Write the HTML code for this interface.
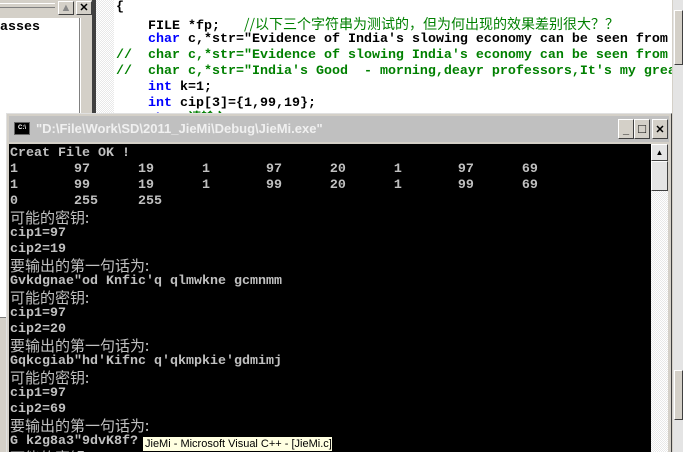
<!DOCTYPE html><html><head><meta charset="utf-8"><style>
*{margin:0;padding:0;box-sizing:border-box}
html,body{width:683px;height:452px;overflow:hidden}
body{background:#fff;position:relative;font-family:"Liberation Mono","Noto Sans CJK SC",monospace}
.abs{position:absolute}
.code{position:absolute;left:116px;top:0;font:bold 13.33px/16px "Liberation Mono","Noto Sans CJK SC",monospace;color:#000}
.code div,.con div{height:16px;line-height:16px;white-space:pre;overflow:visible}
.b{color:#0000ff}.g{color:#008000}
.con{position:absolute;left:10px;top:146px;font:bold 13.33px/16px "Liberation Mono","Noto Sans CJK SC",monospace;color:#c0c0c0}
.cj{font-weight:normal;font-family:"Noto Sans CJK SC",sans-serif;font-size:15px;line-height:16px}
.btn{position:absolute;width:16px;height:14px;background:#d4d0c8;border:1px solid;border-color:#fff #404040 #404040 #fff;font:bold 11px/12px "Liberation Sans",sans-serif;text-align:center;color:#000}
.dith{background-image:repeating-conic-gradient(#e8e8e8 0 25%,#fff 0 50%);background-size:2px 2px}
</style></head><body>
<div class="abs" style="left:0;top:0;width:96px;height:452px;background:#d4d0c8"></div>
<div class="abs" style="left:0;top:3px;width:55px;height:5px;border-top:1px solid #fff;border-bottom:1px solid #808080"></div>
<div class="btn" style="left:58px;top:1px;color:#888">▲</div>
<div class="btn" style="left:76px;top:1px">✕</div>
<div class="abs" style="left:0;top:18px;width:80px;height:300px;background:#fff;border-right:1px solid #808080;border-bottom:1px solid #808080"></div>
<div class="abs" style="left:0;top:20px;font:bold 13.33px/16px 'Liberation Mono',monospace">asses</div>
<div class="abs" style="left:80px;top:18px;width:14px;height:434px;background:#d4d0c8;border-left:1px solid #fff"></div>
<div class="abs" style="left:92px;top:0;width:4px;height:452px;background:#404040"></div>
<div class="abs dith" style="left:96px;top:0;width:18px;height:452px"></div>
<div class="code">
<div>{</div>
<div>    FILE *fp;   <span class="g cj" style="font-size:14px">//以下三个字符串为测试的，但为何出现的效果差别很大？？</span></div>
<div>    <span class="b">char</span> c,*str="Evidence of India's slowing economy can be seen from</div>
<div class="g">//  char c,*str="Evidence of slowing India's economy can be seen from</div>
<div class="g">//  char c,*str="India's Good  - morning,deayr professors,It's my grea</div>
<div>    <span class="b">int</span> k=1;</div>
<div>    <span class="b">int</span> cip[3]={1,99,19};</div>
<div>    <span class="b">char</span> <span class="g">请输入</span></div>
</div>
<div class="abs" style="left:672px;top:0;width:11px;height:452px;background:#e4e4e4;border-left:1px solid #d4d0c8"></div>
<div class="abs" style="left:674px;top:10px;width:9px;height:55px;background:#d4d0c8;border:1px solid;border-color:#fff #404040 #404040 #fff"></div>
<div class="abs" style="left:674px;top:370px;width:9px;height:50px;background:#d4d0c8;border:1px solid;border-color:#fff #404040 #404040 #fff"></div>
<div class="abs" style="left:6px;top:113px;width:666px;height:345px;background:#d4d0c8;border:1px solid;border-color:#e0e0e0 #404040 #404040 #e0e0e0"></div>
<div class="abs" style="left:9px;top:116px;width:660px;height:26px;background:#c0c0c0"></div>
<div class="abs" style="left:14px;top:122px;width:16px;height:13px;background:#000;border:1px solid #666;color:#fff;font:bold 6px/11px 'Liberation Sans',sans-serif;text-align:center">C:\</div>
<div class="abs" style="left:36px;top:120px;font:bold 13px/18px 'Liberation Sans',sans-serif;color:#f0f0f0;white-space:nowrap">"D:\File\Work\SD\2011_JieMi\Debug\JieMi.exe"</div>
<div class="btn" style="left:618px;top:119px;width:16px;height:20px;line-height:20px">_</div>
<div class="btn" style="left:634px;top:119px;width:16px;height:20px;line-height:18px;font-size:13px">□</div>
<div class="btn" style="left:652px;top:119px;width:16px;height:20px;line-height:20px">✕</div>
<div class="abs" style="left:9px;top:144px;width:642px;height:310px;background:#000"></div>
<div class="abs dith" style="left:651px;top:144px;width:17px;height:310px"></div>
<div class="abs" style="left:651px;top:144px;width:17px;height:17px;background:#e4e4e4;border:1px solid;border-color:#fff #404040 #404040 #fff;font:8px/15px sans-serif;text-align:center">▲</div>
<div class="abs" style="left:651px;top:161px;width:17px;height:30px;background:#e4e4e4;border:1px solid;border-color:#fff #404040 #404040 #fff"></div>
<div class="con">
<div>Creat File OK !</div>
<div>1       97      19      1       97      20      1       97      69</div>
<div>1       99      19      1       99      20      1       99      69</div>
<div>0       255     255</div>
<div class="cj">可能的密钥:</div>
<div>cip1=97</div>
<div>cip2=19</div>
<div class="cj">要输出的第一句话为:</div>
<div>Gvkdgnae"od Knfic'q qlmwkne gcmnmm</div>
<div class="cj">可能的密钥:</div>
<div>cip1=97</div>
<div>cip2=20</div>
<div class="cj">要输出的第一句话为:</div>
<div>Gqkcgiab"hd'Kifnc q'qkmpkie'gdmimj</div>
<div class="cj">可能的密钥:</div>
<div>cip1=97</div>
<div>cip2=69</div>
<div class="cj">要输出的第一句话为:</div>
<div>G k2g8a3"9dvK8f?</div>
<div class="cj">可能的密钥:</div>
</div>
<div class="abs" style="left:142px;top:436px;width:191px;height:16px;background:#ffffe1;border:1px solid #000;font:11px/14px 'Liberation Sans',sans-serif;padding-left:2px;white-space:nowrap;overflow:hidden">JieMi - Microsoft Visual C++ - [JieMi.c]</div>
</body></html>
